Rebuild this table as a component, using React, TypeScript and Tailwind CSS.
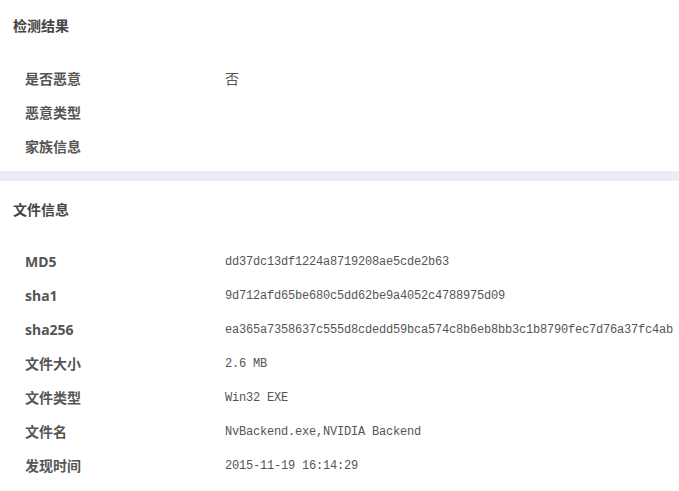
import React from "react";

const sans = "font-['Noto_Sans','Noto_Sans_CJK_SC',sans-serif]";

function Row({ label, value, cjk }: { label: string; value?: string; cjk?: boolean }) {
  return (
    <div className="flex h-[34px] items-center">
      <div className={`w-[225px] shrink-0 pl-[25px] text-[14px] font-bold text-[#555] ${sans}`}>{label}</div>
      {value !== undefined && (
        cjk ? (
          <div className="text-[14px] text-[#555] font-['Noto_Sans_CJK_SC',sans-serif]">{value}</div>
        ) : (
          <div className="pt-[2px] text-[12px] tracking-[-0.2px] text-[#555] font-['Liberation_Mono','Noto_Sans_CJK_SC',monospace] whitespace-nowrap">{value}</div>
        )
      )}
    </div>
  );
}

export default function App() {
  return (
    <div className="w-[679px] h-[491px] bg-white overflow-hidden">
      <div className={`h-[50px] flex items-center pl-[13px] text-[14px] font-bold text-[#444] ${sans}`}>检测结果</div>
      <div className="mt-[11px]">
        <Row label="是否恶意" value="否" cjk />
        <Row label="恶意类型" />
        <Row label="家族信息" />
      </div>
      <div className="mt-[8px] h-[10px] bg-[#e9edf4]" />
      <div className={`h-[56px] flex items-center pl-[13px] text-[14px] font-bold text-[#444] ${sans}`}>文件信息</div>
      <div className="mt-[7px]">
        <Row label="MD5" value="dd37dc13df1224a8719208ae5cde2b63" />
        <Row label="sha1" value="9d712afd65be680c5dd62be9a4052c4788975d09" />
        <Row label="sha256" value="ea365a7358637c555d8cdedd59bca574c8b6eb8bb3c1b8790fec7d76a37fc4ab" />
        <Row label="文件大小" value="2.6 MB" />
        <Row label="文件类型" value="Win32 EXE" />
        <Row label="文件名" value="NvBackend.exe,NVIDIA Backend" />
        <Row label="发现时间" value="2015-11-19 16:14:29" />
      </div>
    </div>
  );
}
